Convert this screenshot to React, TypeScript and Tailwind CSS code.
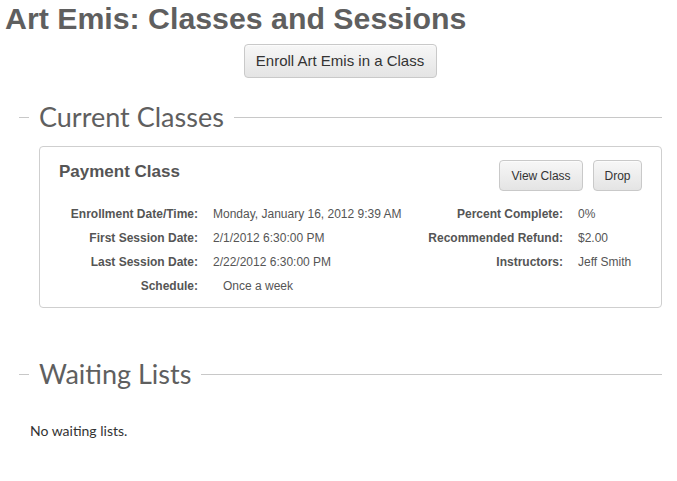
import React from "react"

const arial = { fontFamily: '"Liberation Sans", Arial, sans-serif' }
const heading = { fontFamily: 'Lato, "Open Sans", sans-serif' }

function SectionTitle({ children }: { children: React.ReactNode }) {
  return (
    <div className="flex items-center">
      <div className="h-px w-[10px] bg-[#c8c8c8]" />
      <h2 className="px-[10px] text-[27px] leading-[32px] text-[#5f5f5f]" style={heading}>
        {children}
      </h2>
      <div className="h-px flex-1 bg-[#c8c8c8]" />
    </div>
  )
}

function GrayButton({ children, className = "" }: { children: React.ReactNode; className?: string }) {
  return (
    <button
      className={
        "rounded-[4px] border border-[#c9c9c9] bg-gradient-to-b from-[#f7f7f7] to-[#e4e4e4] text-[#333] shadow-[inset_0_1px_0_rgba(255,255,255,0.6)] " +
        className
      }
      style={arial}
    >
      {children}
    </button>
  )
}

const leftRows = [
  ["Enrollment Date/Time:", "Monday, January 16, 2012 9:39 AM"],
  ["First Session Date:", "2/1/2012 6:30:00 PM"],
  ["Last Session Date:", "2/22/2012 6:30:00 PM"],
  ["Schedule:", "Once a week"],
]

const rightRows = [
  ["Percent Complete:", "0%"],
  ["Recommended Refund:", "$2.00"],
  ["Instructors:", "Jeff Smith"],
]

export default function App() {
  return (
    <div className="min-h-screen bg-white">
      <h1 className="pl-[5px] pt-[2px] text-[30.3px] font-bold leading-[34px] text-[#5f5f5f]" style={arial}>
        Art Emis: Classes and Sessions
      </h1>

      <div className="mt-[8px] flex justify-center pl-[3px]">
        <GrayButton className="h-[34px] w-[193px] text-[15px]">Enroll Art Emis in a Class</GrayButton>
      </div>

      <div className="ml-[19px] mr-[15px] mt-[23px]">
        <SectionTitle>Current Classes</SectionTitle>

        {/* class card */}
        <div className="ml-[20px] mt-[13px] h-[162px] rounded-[4px] border border-[#cfcfcf] px-[19px] pt-[13px]" style={arial}>
          <div className="flex items-start justify-between">
            <h3 className="text-[17px] font-bold leading-[24px] text-[#555]">Payment Class</h3>
            <div className="flex gap-[10px]">
              <GrayButton className="h-[31px] w-[84px] text-[12px]">View Class</GrayButton>
              <GrayButton className="h-[31px] w-[49px] text-[12px]">Drop</GrayButton>
            </div>
          </div>

          <div className="mt-[11px] flex items-start whitespace-nowrap text-[12px] leading-[24px]">
            <div className="grid grid-cols-[139px_1fr] gap-x-[15px]">
              {leftRows.map(([label, value]) => (
                <React.Fragment key={label}>
                  <div className="text-right font-bold text-[#555]">{label}</div>
                  <div className={"text-[#555] " + (label === "Schedule:" ? "pl-[10px]" : "")}>{value}</div>
                </React.Fragment>
              ))}
            </div>
            <div className="ml-auto mr-[-6px] grid w-[235px] grid-cols-[150px_1fr] gap-x-[15px]">
              {rightRows.map(([label, value]) => (
                <React.Fragment key={label}>
                  <div className="text-right font-bold text-[#555]">{label}</div>
                  <div className="text-[#555]">{value}</div>
                </React.Fragment>
              ))}
            </div>
          </div>
        </div>

        <div className="mt-[50px]">
          <SectionTitle>Waiting Lists</SectionTitle>
        </div>
        <p className="ml-[11px] mt-[30px] text-[14px] text-[#333]" style={heading}>
          No waiting lists.
        </p>
      </div>
    </div>
  )
}
